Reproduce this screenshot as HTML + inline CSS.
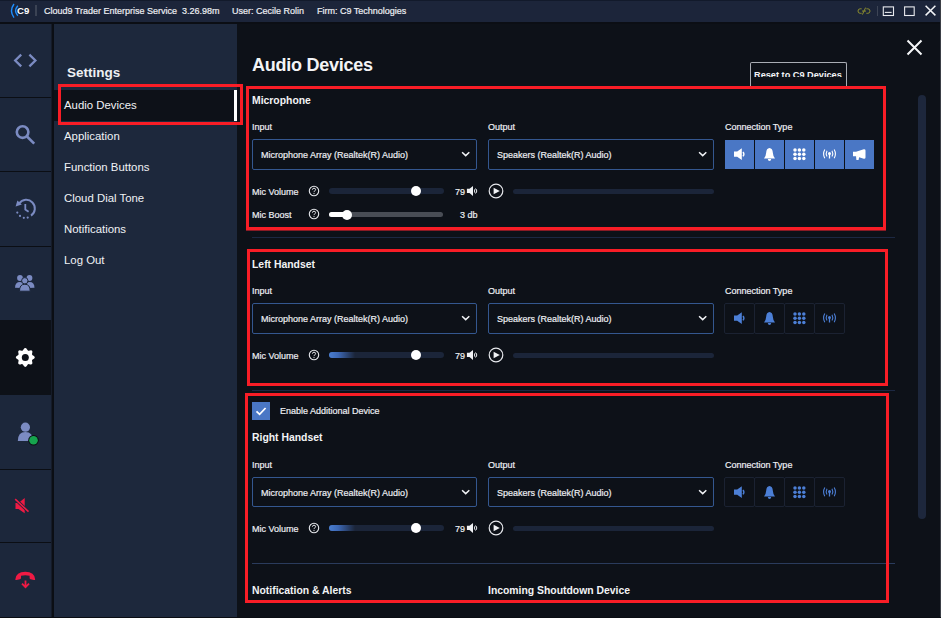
<!DOCTYPE html>
<html><head><meta charset="utf-8">
<style>
*{box-sizing:border-box;margin:0;padding:0}
html,body{width:941px;height:618px;overflow:hidden;background:#0d1118;font-family:"Liberation Sans",sans-serif;color:#eceef2}
.a{position:absolute}
svg{overflow:visible}
.t9{font-size:9px;white-space:nowrap;line-height:1;color:#eceef2;-webkit-text-stroke:0.2px #eceef2}
.red{border:3px solid #f81d26}
.nav{font-size:11.4px;color:#f0f2f5;white-space:nowrap;line-height:1}
.sel{border:1px solid #34578f;height:31px;border-radius:2px;background:#0d1118}
.btn{width:29px;height:29px;background:#4a77c5}
.btnd{width:31px;height:31px;border:1px solid #1b2232;border-radius:2px}
.hsep{height:1px;background:#1c2842}
h2{font-size:10.4px;font-weight:bold;white-space:nowrap;line-height:1;color:#f2f3f5}
</style></head><body>
<div class="a" style="left:0;top:0;width:941px;height:22px;background:#1c253a;border-top:1px solid #121a2b"></div>
<div class="a" style="left:0;top:22px;width:941px;height:2px;background:#0b0e14"></div>
<div class="a" style="left:0;top:24px;width:52px;height:594px;background:#1c273b"></div>
<div class="a" style="left:0;top:97px;width:52px;height:1px;background:#0b0e14"></div><div class="a" style="left:0;top:171px;width:52px;height:1px;background:#0b0e14"></div><div class="a" style="left:0;top:246px;width:52px;height:1px;background:#0b0e14"></div><div class="a" style="left:0;top:469px;width:52px;height:1px;background:#0b0e14"></div><div class="a" style="left:0;top:542px;width:52px;height:1px;background:#0b0e14"></div><div class="a" style="left:0;top:320px;width:52px;height:75px;background:#0d1118"></div><div class="a" style="left:51px;top:24px;width:1px;height:594px;background:#151b28"></div><div class="a" style="left:52px;top:24px;width:2px;height:594px;background:#0b0e14"></div><div class="a" style="left:54px;top:24px;width:183px;height:594px;background:#1d283c"></div><svg class="a" style="left:10px;top:45px" width="30" height="30" viewBox="0 0 30 30"><path d="M11.2 9.6 L5.2 15.5 L11.2 21.4 M19.4 9.6 L25.4 15.5 L19.4 21.4" fill="none" stroke="#7b8bc2" stroke-width="2.3"/></svg><svg class="a" style="left:10px;top:119px" width="30" height="30" viewBox="0 0 30 30"><circle cx="12.6" cy="13.1" r="5.8" fill="none" stroke="#7b8bc2" stroke-width="2.6"/><path d="M17 17.5 L24.2 24.7" stroke="#7b8bc2" stroke-width="2.6"/></svg><svg class="a" style="left:10px;top:193px" width="30" height="30" viewBox="0 0 30 30"><path d="M9.2 10.5 A8.6 8.6 0 1 1 21 22.6" fill="none" stroke="#7b8bc2" stroke-width="2"/><path d="M5.6 13.5 L7.4 7.4 L11.8 11.6 Z" fill="#7b8bc2"/><circle cx="7.3" cy="19.6" r="1.1" fill="#7b8bc2"/><circle cx="10" cy="22.9" r="1.1" fill="#7b8bc2"/><circle cx="13.8" cy="24.8" r="1.1" fill="#7b8bc2"/><circle cx="17.7" cy="24.6" r="1.1" fill="#7b8bc2"/><path d="M15.3 11 V16.5 L18.6 18.8" fill="none" stroke="#7b8bc2" stroke-width="1.8"/></svg><svg class="a" style="left:10px;top:268px" width="30" height="30" viewBox="0 0 30 30"><circle cx="10" cy="10" r="2.9" fill="#7b8bc2"/><circle cx="19.5" cy="10" r="2.9" fill="#7b8bc2"/><path d="M5 19.8 Q5 14 10 14 Q13 14 14 15.5 L11.5 20 Z" fill="#7b8bc2"/><path d="M24.5 19.8 Q24.5 14 19.5 14 Q16.5 14 15.5 15.5 L18 20 Z" fill="#7b8bc2"/><circle cx="14.8" cy="12.8" r="3.2" fill="#7b8bc2" stroke="#1c273b" stroke-width="1"/><path d="M9.5 23.2 Q9.5 16.2 14.8 16.2 Q20.2 16.2 20.2 23.2 Z" fill="#7b8bc2" stroke="#1c273b" stroke-width="1"/></svg><svg class="a" style="left:10px;top:342px" width="30" height="30" viewBox="0 0 30 30"><polygon points="15.30,5.90 16.20,6.27 16.94,7.16 17.51,8.11 18.09,8.66 18.89,8.68 19.97,8.42 21.12,8.31 22.02,8.68 22.39,9.58 22.28,10.73 22.02,11.81 22.04,12.61 22.59,13.19 23.54,13.76 24.43,14.50 24.80,15.40 24.43,16.30 23.54,17.04 22.59,17.61 22.04,18.19 22.02,18.99 22.28,20.07 22.39,21.22 22.02,22.12 21.12,22.49 19.97,22.38 18.89,22.12 18.09,22.14 17.51,22.69 16.94,23.64 16.20,24.53 15.30,24.90 14.40,24.53 13.66,23.64 13.09,22.69 12.51,22.14 11.71,22.12 10.63,22.38 9.48,22.49 8.58,22.12 8.21,21.22 8.32,20.07 8.58,18.99 8.56,18.19 8.01,17.61 7.06,17.04 6.17,16.30 5.80,15.40 6.17,14.50 7.06,13.76 8.01,13.19 8.56,12.61 8.58,11.81 8.32,10.73 8.21,9.58 8.58,8.68 9.48,8.31 10.63,8.42 11.71,8.68 12.51,8.66 13.09,8.11 13.66,7.16 14.40,6.27" fill="#ffffff"/><circle cx="15.3" cy="15.4" r="3.5" fill="#0d1118"/></svg><svg class="a" style="left:10px;top:417px" width="30" height="30" viewBox="0 0 30 30"><circle cx="15.4" cy="10.2" r="4.6" fill="#7b8bc2"/><path d="M7.8 24 Q7.8 15 15.4 15 Q23 15 23 24 Z" fill="#7b8bc2"/><circle cx="23.5" cy="23.2" r="5.3" fill="#0b0e14"/><circle cx="23.5" cy="23.2" r="4.3" fill="#16a34e"/></svg><svg class="a" style="left:5px;top:490px" width="30" height="30" viewBox="0 0 30 30"><path d="M10.5 13 H13.5 L19.7 8 V23.3 L13.5 19 H10.5 Z" fill="#ef1a44"/><path d="M10.2 9.2 L23.5 21.6" stroke="#1c273b" stroke-width="3.2"/><path d="M10.2 9.2 L23.5 21.6" stroke="#ef1a44" stroke-width="1.6"/></svg><svg class="a" style="left:10px;top:565px" width="30" height="30" viewBox="0 0 30 30"><path d="M5.3 14.5 Q6 6.8 15.3 6.8 Q24.6 6.8 25.2 14.5 Q25 15.2 24 15 L20.5 14.3 Q19.6 14 19.6 13 V10.8 Q15.3 9.6 11 10.8 V13 Q11 14 10 14.3 L6.5 15 Q5.4 15.2 5.3 14.5 Z" fill="#ef1a44"/><path d="M15.5 15.5 V22 M12 18.6 L15.5 22.2 L19 18.6" fill="none" stroke="#ef1a44" stroke-width="1.8"/></svg><svg class="a" style="left:0px;top:0px" width="40" height="22" viewBox="0 0 40 22"><path d="M14 4 Q9 10.8 14 17.6" fill="none" stroke="#1e8fff" stroke-width="1.4"/><path d="M17.8 5.8 Q13.4 10.8 17.8 15.8" fill="none" stroke="#1e8fff" stroke-width="1.4"/></svg><div class="a" style="left:17px;top:6px;font-size:9.6px;font-weight:bold;line-height:1;color:#fff">C9</div><div class="a" style="left:35px;top:5px;width:2px;height:11px;background:#3b4354"></div><div class="a t9" style="left:44px;top:7px;">Cloud9 Trader Enterprise Service&nbsp; 3.26.98m</div><div class="a t9" style="left:232px;top:7px;">User: Cecile Rolin</div><div class="a t9" style="left:317px;top:7px;">Firm: C9 Technologies</div><svg class="a" style="left:856px;top:5.5px" width="16" height="12" viewBox="0 0 16 12"><path d="M5.6 2.8 H4.2 Q2 2.8 2 5.05 Q2 7.3 4.2 7.3 H5.6 M10.4 2.8 H11.8 Q14 2.8 14 5.05 Q14 7.3 11.8 7.3 H10.4 M9.6 1.6 L6.4 8.6 M6 5.05 H10" fill="none" stroke="#8d8e2e" stroke-width="1"/></svg><div class="a" style="left:877px;top:6px;width:1px;height:10px;background:#3d4556"></div><svg class="a" style="left:882px;top:5px" width="14" height="13" viewBox="0 0 14 13"><rect x="1.3" y="1.9" width="10.2" height="8.6" fill="none" stroke="#e8eaee" stroke-width="1.1"/><path d="M2.8 7.4 H9.6" stroke="#e8eaee" stroke-width="1.1"/></svg><svg class="a" style="left:903px;top:5px" width="14" height="13" viewBox="0 0 14 13"><rect x="1.6" y="1.9" width="9.6" height="8.6" fill="none" stroke="#e8eaee" stroke-width="1.1"/></svg><svg class="a" style="left:924px;top:4px" width="13" height="13" viewBox="0 0 13 13"><path d="M1.6 1.8 L11.4 11.4 M11.4 1.8 L1.6 11.4" stroke="#f2f4f7" stroke-width="1.5"/></svg><div class="a" style="left:67px;top:66px;font-size:13.5px;font-weight:bold;line-height:1;color:#eef0f3">Settings</div><div class="a" style="left:54px;top:90px;width:183px;height:31px;background:#0d1118"></div><div class="a" style="left:234px;top:90px;width:3px;height:31px;background:#fff"></div><div class="a nav" style="left:64px;top:100px">Audio Devices</div><div class="a nav" style="left:64px;top:131px">Application</div><div class="a nav" style="left:64px;top:162px">Function Buttons</div><div class="a nav" style="left:64px;top:193px">Cloud Dial Tone</div><div class="a nav" style="left:64px;top:224px">Notifications</div><div class="a nav" style="left:64px;top:255px">Log Out</div><div class="a red" style="left:58px;top:84px;width:185px;height:41px"></div><div class="a" style="left:252px;top:56px;font-size:18px;letter-spacing:-0.25px;font-weight:bold;line-height:1;color:#f3f4f6">Audio Devices</div><svg class="a" style="left:906px;top:39px" width="17" height="17" viewBox="0 0 17 17"><path d="M1.5 1.5 L15.5 15.5 M15.5 1.5 L1.5 15.5" stroke="#f5f6f8" stroke-width="2"/></svg><div class="a" style="left:750px;top:62px;width:97px;height:24px;border:1px solid #a9adb4;border-bottom:none;border-radius:2px 2px 0 0"></div><div class="a" style="left:754px;top:69px;width:90px;height:8px;overflow:hidden"><div style="font-size:9.2px;font-weight:bold;line-height:1;color:#f2f4f7;white-space:nowrap;margin-top:1px;transform:translateY(0.6px)">Reset to C9 Devices</div></div><div class="a" style="left:252px;top:96px"><h2>Microphone</h2></div><div class="a t9" style="left:252px;top:123px;">Input</div><div class="a t9" style="left:488px;top:123px;">Output</div><div class="a t9" style="left:725px;top:123px;">Connection Type</div><div class="a sel" style="left:252px;top:139px;width:225px;height:31px"></div><div class="a t9" style="left:261px;top:151px;">Microphone Array (Realtek(R) Audio)</div><svg class="a" style="left:461.4px;top:151px" width="10" height="6" viewBox="0 0 10 6"><path d="M1.1 1.2 L4.7 4.6 L8.3 1.2" fill="none" stroke="#f2f4f7" stroke-width="1.5"/></svg><div class="a sel" style="left:488px;top:139px;width:226px;height:31px"></div><div class="a t9" style="left:497px;top:151px;">Speakers (Realtek(R) Audio)</div><svg class="a" style="left:698.4px;top:151px" width="10" height="6" viewBox="0 0 10 6"><path d="M1.1 1.2 L4.7 4.6 L8.3 1.2" fill="none" stroke="#f2f4f7" stroke-width="1.5"/></svg><div class="a btn" style="left:725px;top:140px"></div><svg class="a" style="left:725px;top:140px" width="29" height="29" viewBox="0 0 29 29"><path d="M9 11.5 H12.2 L16.8 8.3 V20 L12.2 16.8 H9 Z" fill="#ffffff"/><path d="M18 12 Q19.8 14.2 18 16.4" fill="none" stroke="#ffffff" stroke-width="1.4"/></svg><div class="a btn" style="left:755px;top:140px"></div><svg class="a" style="left:755px;top:140px" width="29" height="29" viewBox="0 0 29 29"><path d="M14.5 8 Q17.6 8.3 17.8 12.5 Q18 16 20 18.6 H9 Q11 16 11.2 12.5 Q11.4 8.3 14.5 8 Z" fill="#ffffff"/><path d="M12.8 19 H16.2 Q16 21 14.5 21 Q13 21 12.8 19 Z" fill="#ffffff"/></svg><div class="a btn" style="left:785px;top:140px"></div><svg class="a" style="left:785px;top:140px" width="29" height="29" viewBox="0 0 29 29"><circle cx="10.0" cy="10.0" r="1.75" fill="#ffffff"/><circle cx="10.0" cy="14.3" r="1.75" fill="#ffffff"/><circle cx="10.0" cy="18.6" r="1.75" fill="#ffffff"/><circle cx="14.4" cy="10.0" r="1.75" fill="#ffffff"/><circle cx="14.4" cy="14.3" r="1.75" fill="#ffffff"/><circle cx="14.4" cy="18.6" r="1.75" fill="#ffffff"/><circle cx="18.8" cy="10.0" r="1.75" fill="#ffffff"/><circle cx="18.8" cy="14.3" r="1.75" fill="#ffffff"/><circle cx="18.8" cy="18.6" r="1.75" fill="#ffffff"/></svg><div class="a btn" style="left:815px;top:140px"></div><svg class="a" style="left:815px;top:140px" width="29" height="29" viewBox="0 0 29 29"><circle cx="14.5" cy="13.6" r="1.5" fill="#ffffff"/><path d="M14.5 14 V18.5" stroke="#ffffff" stroke-width="1.3"/><path d="M12 10.8 Q10.4 13.8 12 16.6 M17 10.8 Q18.6 13.8 17 16.6" fill="none" stroke="#ffffff" stroke-width="1.1"/><path d="M9.8 9.4 Q7.4 13.8 9.8 18.2 M19.2 9.4 Q21.6 13.8 19.2 18.2" fill="none" stroke="#ffffff" stroke-width="1.1"/></svg><div class="a btn" style="left:845px;top:140px"></div><svg class="a" style="left:845px;top:140px" width="29" height="29" viewBox="0 0 29 29"><path d="M8 11.8 H11 L18.8 9.2 Q20.5 9 20.5 10.5 V17.5 Q20.5 19 18.8 18.8 L11 16.2 H8 Z" fill="#ffffff"/><path d="M11 16 L14.2 16.6 L13.6 20 H11.4 Z" fill="#ffffff"/></svg><div class="a t9" style="left:252px;top:187.5px;">Mic Volume</div><svg class="a" style="left:308px;top:185px" width="12" height="12" viewBox="0 0 12 12"><circle cx="6" cy="6" r="4.7" fill="none" stroke="#e6e8ec" stroke-width="1.1"/><path d="M4.4 4.7 Q4.5 3.2 6 3.2 Q7.6 3.2 7.6 4.6 Q7.6 5.5 6.6 6 Q6 6.3 6 7.1" fill="none" stroke="#e6e8ec" stroke-width="1"/><circle cx="6" cy="8.6" r="0.6" fill="#e6e8ec"/></svg><div class="a" style="left:329px;top:188px;width:115px;height:6px;border-radius:3px;background:#1b2539"></div><div class="a" style="left:411px;top:186.0px;width:10px;height:10px;border-radius:5px;background:#fff"></div><div class="a t9" style="left:455px;top:187.5px;">79</div><svg class="a" style="left:466px;top:186.1px" width="12" height="11" viewBox="0 0 12 11"><path d="M0.9 2.8 H3.5 L7 0.1 V10 L3.5 7 H0.9 Z" fill="#f0f2f5"/><ellipse cx="9.6" cy="5" rx="1.1" ry="2.1" fill="none" stroke="#e8eaee" stroke-width="1"/></svg><svg class="a" style="left:487.7px;top:183.4px" width="16" height="16" viewBox="0 0 16 16"><circle cx="8" cy="8" r="6.8" fill="none" stroke="#e6e8ec" stroke-width="1.2"/><path d="M5.6 4.7 L11.8 8 L5.6 11.3 Z" fill="#f0f2f5"/></svg><div class="a" style="left:513px;top:189px;width:201px;height:5px;border-radius:3px;background:#1b2539"></div><div class="a t9" style="left:252px;top:211px;">Mic Boost</div><svg class="a" style="left:308px;top:208.4px" width="12" height="12" viewBox="0 0 12 12"><circle cx="6" cy="6" r="4.7" fill="none" stroke="#e6e8ec" stroke-width="1.1"/><path d="M4.4 4.7 Q4.5 3.2 6 3.2 Q7.6 3.2 7.6 4.6 Q7.6 5.5 6.6 6 Q6 6.3 6 7.1" fill="none" stroke="#e6e8ec" stroke-width="1"/><circle cx="6" cy="8.6" r="0.6" fill="#e6e8ec"/></svg><div class="a" style="left:329px;top:211.8px;width:114px;height:5px;border-radius:3px;background:#494d55"></div><div class="a" style="left:329px;top:212.3px;width:18px;height:4.4px;border-radius:3px;background:#ffffff"></div><div class="a" style="left:342px;top:209.5px;width:10px;height:10px;border-radius:5px;background:#fff"></div><div class="a t9" style="left:460px;top:211px;">3 db</div><div class="a red" style="left:246px;top:86px;width:640px;height:144px"></div><div class="a" style="left:246px;top:230px;width:640px;height:1px;background:#8a1b25"></div><div class="a hsep" style="left:252px;top:237px;width:643px"></div><div class="a" style="left:252px;top:260px"><h2>Left Handset</h2></div><div class="a t9" style="left:252px;top:287px;">Input</div><div class="a t9" style="left:488px;top:287px;">Output</div><div class="a t9" style="left:725px;top:287px;">Connection Type</div><div class="a sel" style="left:252px;top:303px;width:225px;height:31px"></div><div class="a t9" style="left:261px;top:315px;">Microphone Array (Realtek(R) Audio)</div><svg class="a" style="left:461.4px;top:315px" width="10" height="6" viewBox="0 0 10 6"><path d="M1.1 1.2 L4.7 4.6 L8.3 1.2" fill="none" stroke="#f2f4f7" stroke-width="1.5"/></svg><div class="a sel" style="left:488px;top:303px;width:226px;height:31px"></div><div class="a t9" style="left:497px;top:315px;">Speakers (Realtek(R) Audio)</div><svg class="a" style="left:698.4px;top:315px" width="10" height="6" viewBox="0 0 10 6"><path d="M1.1 1.2 L4.7 4.6 L8.3 1.2" fill="none" stroke="#f2f4f7" stroke-width="1.5"/></svg><div class="a btnd" style="left:724px;top:303px;height:31px"></div><svg class="a" style="left:725px;top:304px" width="29" height="29" viewBox="0 0 29 29"><path d="M9 11.5 H12.2 L16.8 8.3 V20 L12.2 16.8 H9 Z" fill="#4c7fd6"/><path d="M18 12 Q19.8 14.2 18 16.4" fill="none" stroke="#4c7fd6" stroke-width="1.4"/></svg><div class="a btnd" style="left:754px;top:303px;height:31px"></div><svg class="a" style="left:755px;top:304px" width="29" height="29" viewBox="0 0 29 29"><path d="M14.5 8 Q17.6 8.3 17.8 12.5 Q18 16 20 18.6 H9 Q11 16 11.2 12.5 Q11.4 8.3 14.5 8 Z" fill="#4c7fd6"/><path d="M12.8 19 H16.2 Q16 21 14.5 21 Q13 21 12.8 19 Z" fill="#4c7fd6"/></svg><div class="a btnd" style="left:784px;top:303px;height:31px"></div><svg class="a" style="left:785px;top:304px" width="29" height="29" viewBox="0 0 29 29"><circle cx="10.0" cy="10.0" r="1.75" fill="#4c7fd6"/><circle cx="10.0" cy="14.3" r="1.75" fill="#4c7fd6"/><circle cx="10.0" cy="18.6" r="1.75" fill="#4c7fd6"/><circle cx="14.4" cy="10.0" r="1.75" fill="#4c7fd6"/><circle cx="14.4" cy="14.3" r="1.75" fill="#4c7fd6"/><circle cx="14.4" cy="18.6" r="1.75" fill="#4c7fd6"/><circle cx="18.8" cy="10.0" r="1.75" fill="#4c7fd6"/><circle cx="18.8" cy="14.3" r="1.75" fill="#4c7fd6"/><circle cx="18.8" cy="18.6" r="1.75" fill="#4c7fd6"/></svg><div class="a btnd" style="left:814px;top:303px;height:31px"></div><svg class="a" style="left:815px;top:304px" width="29" height="29" viewBox="0 0 29 29"><circle cx="14.5" cy="13.6" r="1.5" fill="#4c7fd6"/><path d="M14.5 14 V18.5" stroke="#4c7fd6" stroke-width="1.3"/><path d="M12 10.8 Q10.4 13.8 12 16.6 M17 10.8 Q18.6 13.8 17 16.6" fill="none" stroke="#4c7fd6" stroke-width="1.1"/><path d="M9.8 9.4 Q7.4 13.8 9.8 18.2 M19.2 9.4 Q21.6 13.8 19.2 18.2" fill="none" stroke="#4c7fd6" stroke-width="1.1"/></svg><div class="a t9" style="left:252px;top:351.5px;">Mic Volume</div><svg class="a" style="left:308px;top:349px" width="12" height="12" viewBox="0 0 12 12"><circle cx="6" cy="6" r="4.7" fill="none" stroke="#e6e8ec" stroke-width="1.1"/><path d="M4.4 4.7 Q4.5 3.2 6 3.2 Q7.6 3.2 7.6 4.6 Q7.6 5.5 6.6 6 Q6 6.3 6 7.1" fill="none" stroke="#e6e8ec" stroke-width="1"/><circle cx="6" cy="8.6" r="0.6" fill="#e6e8ec"/></svg><div class="a" style="left:329px;top:352px;width:115px;height:6px;border-radius:3px;background:#1b2539"></div><div class="a" style="left:329px;top:352px;width:26px;height:6px;border-radius:3px 0 0 3px;background:linear-gradient(90deg,#4a7ed0 0%,#3d68b4 35%,#1b2539 100%)"></div><div class="a" style="left:411px;top:350.0px;width:10px;height:10px;border-radius:5px;background:#fff"></div><div class="a t9" style="left:455px;top:351.5px;">79</div><svg class="a" style="left:466px;top:350.1px" width="12" height="11" viewBox="0 0 12 11"><path d="M0.9 2.8 H3.5 L7 0.1 V10 L3.5 7 H0.9 Z" fill="#f0f2f5"/><ellipse cx="9.6" cy="5" rx="1.1" ry="2.1" fill="none" stroke="#e8eaee" stroke-width="1"/></svg><svg class="a" style="left:487.7px;top:347.4px" width="16" height="16" viewBox="0 0 16 16"><circle cx="8" cy="8" r="6.8" fill="none" stroke="#e6e8ec" stroke-width="1.2"/><path d="M5.6 4.7 L11.8 8 L5.6 11.3 Z" fill="#f0f2f5"/></svg><div class="a" style="left:513px;top:353px;width:201px;height:5px;border-radius:3px;background:#1b2539"></div><div class="a red" style="left:247px;top:249px;width:641px;height:137px"></div><div class="a hsep" style="left:252px;top:390px;width:643px"></div><div class="a" style="left:252px;top:402px;width:18px;height:18px;background:#4a77c5"></div><svg class="a" style="left:252px;top:402px" width="18" height="18" viewBox="0 0 18 18"><path d="M4.5 9.3 L7.6 12.3 L13.6 6" fill="none" stroke="#fff" stroke-width="1.8"/></svg><div class="a t9" style="left:280px;top:407px;">Enable Additional Device</div><div class="a" style="left:252px;top:433px"><h2>Right Handset</h2></div><div class="a t9" style="left:252px;top:461px;">Input</div><div class="a t9" style="left:488px;top:461px;">Output</div><div class="a t9" style="left:725px;top:461px;">Connection Type</div><div class="a sel" style="left:252px;top:477px;width:225px;height:30px"></div><div class="a t9" style="left:261px;top:489px;">Microphone Array (Realtek(R) Audio)</div><svg class="a" style="left:461.4px;top:489px" width="10" height="6" viewBox="0 0 10 6"><path d="M1.1 1.2 L4.7 4.6 L8.3 1.2" fill="none" stroke="#f2f4f7" stroke-width="1.5"/></svg><div class="a sel" style="left:488px;top:477px;width:226px;height:30px"></div><div class="a t9" style="left:497px;top:489px;">Speakers (Realtek(R) Audio)</div><svg class="a" style="left:698.4px;top:489px" width="10" height="6" viewBox="0 0 10 6"><path d="M1.1 1.2 L4.7 4.6 L8.3 1.2" fill="none" stroke="#f2f4f7" stroke-width="1.5"/></svg><div class="a btnd" style="left:724px;top:477px;height:30px"></div><svg class="a" style="left:725px;top:478px" width="29" height="29" viewBox="0 0 29 29"><path d="M9 11.5 H12.2 L16.8 8.3 V20 L12.2 16.8 H9 Z" fill="#4c7fd6"/><path d="M18 12 Q19.8 14.2 18 16.4" fill="none" stroke="#4c7fd6" stroke-width="1.4"/></svg><div class="a btnd" style="left:754px;top:477px;height:30px"></div><svg class="a" style="left:755px;top:478px" width="29" height="29" viewBox="0 0 29 29"><path d="M14.5 8 Q17.6 8.3 17.8 12.5 Q18 16 20 18.6 H9 Q11 16 11.2 12.5 Q11.4 8.3 14.5 8 Z" fill="#4c7fd6"/><path d="M12.8 19 H16.2 Q16 21 14.5 21 Q13 21 12.8 19 Z" fill="#4c7fd6"/></svg><div class="a btnd" style="left:784px;top:477px;height:30px"></div><svg class="a" style="left:785px;top:478px" width="29" height="29" viewBox="0 0 29 29"><circle cx="10.0" cy="10.0" r="1.75" fill="#4c7fd6"/><circle cx="10.0" cy="14.3" r="1.75" fill="#4c7fd6"/><circle cx="10.0" cy="18.6" r="1.75" fill="#4c7fd6"/><circle cx="14.4" cy="10.0" r="1.75" fill="#4c7fd6"/><circle cx="14.4" cy="14.3" r="1.75" fill="#4c7fd6"/><circle cx="14.4" cy="18.6" r="1.75" fill="#4c7fd6"/><circle cx="18.8" cy="10.0" r="1.75" fill="#4c7fd6"/><circle cx="18.8" cy="14.3" r="1.75" fill="#4c7fd6"/><circle cx="18.8" cy="18.6" r="1.75" fill="#4c7fd6"/></svg><div class="a btnd" style="left:814px;top:477px;height:30px"></div><svg class="a" style="left:815px;top:478px" width="29" height="29" viewBox="0 0 29 29"><circle cx="14.5" cy="13.6" r="1.5" fill="#4c7fd6"/><path d="M14.5 14 V18.5" stroke="#4c7fd6" stroke-width="1.3"/><path d="M12 10.8 Q10.4 13.8 12 16.6 M17 10.8 Q18.6 13.8 17 16.6" fill="none" stroke="#4c7fd6" stroke-width="1.1"/><path d="M9.8 9.4 Q7.4 13.8 9.8 18.2 M19.2 9.4 Q21.6 13.8 19.2 18.2" fill="none" stroke="#4c7fd6" stroke-width="1.1"/></svg><div class="a t9" style="left:252px;top:524.5px;">Mic Volume</div><svg class="a" style="left:308px;top:522px" width="12" height="12" viewBox="0 0 12 12"><circle cx="6" cy="6" r="4.7" fill="none" stroke="#e6e8ec" stroke-width="1.1"/><path d="M4.4 4.7 Q4.5 3.2 6 3.2 Q7.6 3.2 7.6 4.6 Q7.6 5.5 6.6 6 Q6 6.3 6 7.1" fill="none" stroke="#e6e8ec" stroke-width="1"/><circle cx="6" cy="8.6" r="0.6" fill="#e6e8ec"/></svg><div class="a" style="left:329px;top:525px;width:115px;height:6px;border-radius:3px;background:#1b2539"></div><div class="a" style="left:329px;top:525px;width:26px;height:6px;border-radius:3px 0 0 3px;background:linear-gradient(90deg,#4a7ed0 0%,#3d68b4 35%,#1b2539 100%)"></div><div class="a" style="left:411px;top:523.0px;width:10px;height:10px;border-radius:5px;background:#fff"></div><div class="a t9" style="left:455px;top:524.5px;">79</div><svg class="a" style="left:466px;top:523.1px" width="12" height="11" viewBox="0 0 12 11"><path d="M0.9 2.8 H3.5 L7 0.1 V10 L3.5 7 H0.9 Z" fill="#f0f2f5"/><ellipse cx="9.6" cy="5" rx="1.1" ry="2.1" fill="none" stroke="#e8eaee" stroke-width="1"/></svg><svg class="a" style="left:487.7px;top:520.4px" width="16" height="16" viewBox="0 0 16 16"><circle cx="8" cy="8" r="6.8" fill="none" stroke="#e6e8ec" stroke-width="1.2"/><path d="M5.6 4.7 L11.8 8 L5.6 11.3 Z" fill="#f0f2f5"/></svg><div class="a" style="left:513px;top:526px;width:201px;height:5px;border-radius:3px;background:#1b2539"></div><div class="a hsep" style="left:252px;top:563px;width:643px;background:#2a3b5c"></div><div class="a" style="left:252px;top:586px"><h2>Notification &amp; Alerts</h2></div><div class="a" style="left:488px;top:586px"><h2>Incoming Shoutdown Device</h2></div><div class="a red" style="left:245px;top:393px;width:644px;height:210px"></div><div class="a" style="left:918px;top:95px;width:8px;height:424px;border-radius:4px;background:#1d273c"></div><div class="a" style="left:940px;top:0;width:1px;height:618px;background:#3b3f46"></div><div class="a" style="left:0;top:617px;width:941px;height:1px;background:#0a0d13"></div></body></html>
